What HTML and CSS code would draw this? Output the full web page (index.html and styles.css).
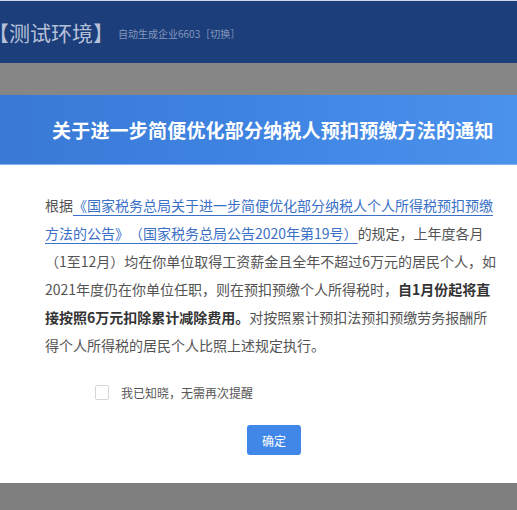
FILE: index.html
```html
<!DOCTYPE html>
<html>
    <head>
        <title>通知</title>
        <link rel="stylesheet" href="styles.css">
    </head>
    <body>
        <div class="topbar">
            <span class="env">【测试环境】</span>
            <span class="company">自动生成企业6603［切换］</span>
        </div>
        <div class="mask-top"></div>

        <div class="dialog">
            <div class="dialog-head">关于进一步简便优化部分纳税人预扣预缴方法的通知</div>
            <div class="dialog-body">
                <p class="notice">根据<a class="notice-link" href="#">《国家税务总局关于进一步简便优化部分纳税人个人所得税预扣预缴方法的公告》（国家税务总局公告2020年第19号）</a>的规定，上年度各月（1至12月）均在你单位取得工资薪金且全年不超过6万元的居民个人，如2021年度仍在你单位任职，则在预扣预缴个人所得税时，<b>自1月份起将直接按照6万元扣除累计减除费用。</b>对按照累计预扣法预扣预缴劳务报酬所得个人所得税的居民个人比照上述规定执行。</p>

                <label class="remind">
                    <span class="check-box"></span>
                    <span class="remind-text">我已知晓，无需再次提醒</span>
                </label>

                <button class="ok-button">确定</button>
            </div>
        </div>

        <div class="mask-bottom"></div>
    </body>
</html>
```

FILE: styles.css
```css
body{
    margin: 0;
    width: 517px;
    height: 510px;
    overflow: hidden;
    font-family: "Microsoft YaHei", "Noto Sans CJK SC", "Noto Sans", sans-serif;
    text-spacing-trim: space-all;
    background-color: #808080;
}

.topbar{
    height: 62px;
    border-top: 1px solid #c9d6ea;
    background-color: #1c3e7b;
    display: flex;
    align-items: center;
    white-space: nowrap;
}

.env{
    margin-left: -12px;
    font-size: 21px;
    color: #b6c1d8;
}

.company{
    margin-left: 4px;
    font-size: 10px;
    color: #8497bb;
    padding-top: 3px;
}

.mask-top{
    height: 32px;
    background-color: #868686;
}

.dialog{
    background-color: #ffffff;
}

.dialog-head{
    height: 70px;
    box-sizing: border-box;
    padding-left: 52px;
    display: flex;
    align-items: center;
    font-size: 19px;
    letter-spacing: 0.2px;
    font-weight: bold;
    color: #ffffff;
    white-space: nowrap;
    background: linear-gradient(90deg, #3a79d6 0%, #3f84e2 50%, #4b92ec 100%);
    border-bottom: 1px solid #7fb0f0;
}

.dialog-body{
    height: 318px;
    box-sizing: border-box;
    padding: 26px 17px 0 45px;
}

.notice{
    margin: 0;
    font-size: 14px;
    line-height: 28px;
    color: #545454;
}

.notice b{
    color: #333333;
}

.notice-link{
    color: #3a70c6;
    text-underline-offset: 4px;
}

.remind{
    display: flex;
    align-items: center;
    margin-top: 25px;
    margin-left: 50px;
}

.check-box{
    width: 12px;
    height: 13px;
    border: 1px solid #d6d6d6;
    border-radius: 2px;
}

.remind-text{
    margin-left: 12px;
    font-size: 12px;
    color: #555555;
}

.ok-button{
    display: block;
    margin: 24px 0 0 202px;
    width: 54px;
    height: 30px;
    border: none;
    border-radius: 3px;
    background-color: #4187e8;
    color: #ffffff;
    font-family: inherit;
    font-size: 12px;
    cursor: pointer;
}

.mask-bottom{
    height: 27px;
    background-color: #7f7f7f;
}
```
